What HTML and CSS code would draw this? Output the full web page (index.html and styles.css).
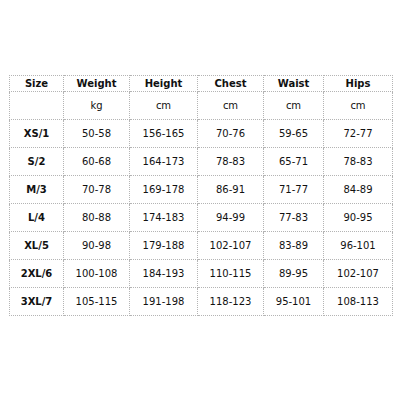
FILE: index.html
```html
<!DOCTYPE html>
<html>
<head>
<meta charset="utf-8">
<link rel="stylesheet" href="styles.css">
</head>
<body>
<div class="wrap">
<table class="sizes">
<colgroup>
<col class="c1"><col class="c2"><col class="c3"><col class="c4"><col class="c5"><col class="c6">
</colgroup>
<tr class="head"><th>Size</th><th>Weight</th><th>Height</th><th>Chest</th><th>Waist</th><th>Hips</th></tr>
<tr><td></td><td>kg</td><td>cm</td><td>cm</td><td>cm</td><td>cm</td></tr>
<tr><th>XS/1</th><td>50-58</td><td>156-165</td><td>70-76</td><td>59-65</td><td>72-77</td></tr>
<tr><th>S/2</th><td>60-68</td><td>164-173</td><td>78-83</td><td>65-71</td><td>78-83</td></tr>
<tr><th>M/3</th><td>70-78</td><td>169-178</td><td>86-91</td><td>71-77</td><td>84-89</td></tr>
<tr><th>L/4</th><td>80-88</td><td>174-183</td><td>94-99</td><td>77-83</td><td>90-95</td></tr>
<tr><th>XL/5</th><td>90-98</td><td>179-188</td><td>102-107</td><td>83-89</td><td>96-101</td></tr>
<tr><th>2XL/6</th><td>100-108</td><td>184-193</td><td>110-115</td><td>89-95</td><td>102-107</td></tr>
<tr><th>3XL/7</th><td>105-115</td><td>191-198</td><td>118-123</td><td>95-101</td><td>108-113</td></tr>
</table>
</div>
</body>
</html>
```
FILE: styles.css
```css
html, body {
  margin: 0;
  padding: 0;
  background: #ffffff;
}
.wrap {
  padding: 75px 0 0 9px;
}
.sizes {
  border-collapse: collapse;
  table-layout: fixed;
  width: 383px;
  font-family: "DejaVu Sans", Verdana, sans-serif;
  font-size: 10px;
  color: #111;
}
.c1 { width: 54px; }
.c2 { width: 66px; }
.c3 { width: 68px; }
.c4 { width: 66px; }
.c5 { width: 60px; }
.c6 { width: 69px; }
.sizes th, .sizes td {
  border: 1px dotted #b4b4b4;
  text-align: center;
  vertical-align: middle;
  padding: 0;
  height: 27px;
}
.sizes th {
  font-weight: bold;
}
.sizes .head th {
  height: 15px;
}
```
